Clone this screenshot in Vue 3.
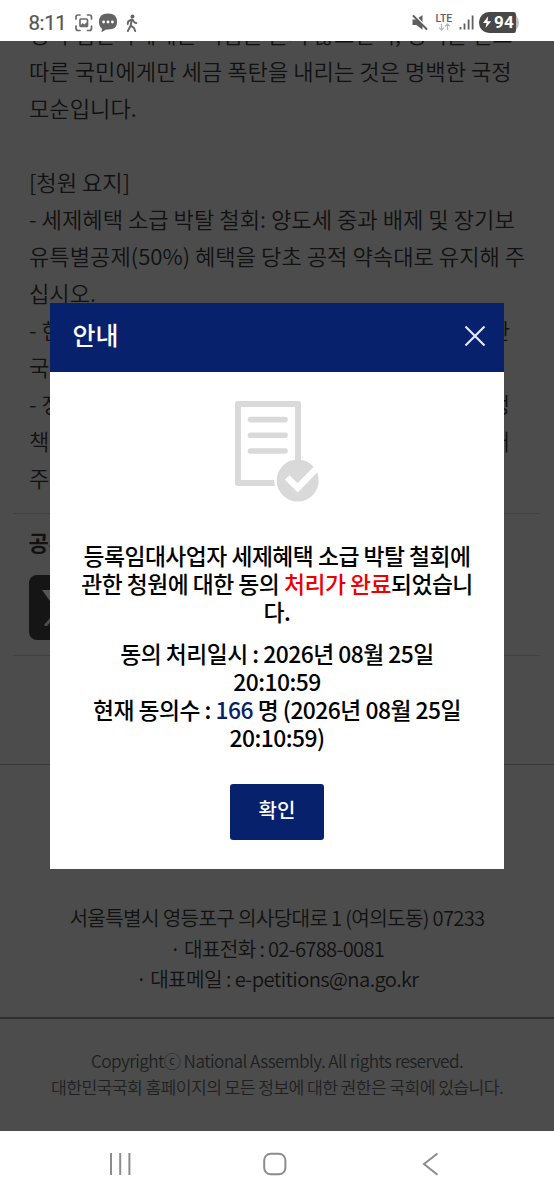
<script setup>
const bodyLines = [
  ['정작 입안자에게는 책임을 묻지 않으면서, 정책을 믿고'],
  ['따른 국민에게만 세금 폭탄을 내리는 것은 명백한 국정'],
  ['모순입니다.'],
  [''],
  ['[청원 요지]'],
  ['- 세제혜택 소급 박탈 철회: 양도세 중과 배제 및 장기보'],
  ['유특별공제(50%) 혜택을 당초 공적 약속대로 유지해 주'],
  ['십시오.'],
  ['- 현', '한'],
  ['국'],
  ['- 정', '정'],
  ['책', '어'],
  ['주'],
]
</script>

<template>
  <div class="phone">
    <header class="status">
      <span class="clock">8:11</span>
      <svg class="left-icons" width="70" height="24" viewBox="72 10 70 24">
        <g fill="none" stroke="#6a6a6a" stroke-width="1.700" stroke-linecap="round">
          <path d="M76 19v-2q0-2 2-2h2M87.500 15h2q2 0 2 2v2M91.500 26v2q0 2.500-2 2.500h-2M80 30.500h-2q-2 0-2-2.500v-2" />
          <rect x="80" y="19" width="7.500" height="7.500" rx="1" />
        </g>
        <path d="M80 26l2.500-3 2 1.500 2-2.500 1 4z" fill="#6a6a6a" />
        <path d="M108 13.500c6 0 9 2.700 9 8.300s-3 7.700-9 7.700h-2l-4.500 2.800.5-3.700c-2.200-1.300-3-3.600-3-6.800 0-5.600 3-8.300 9-8.300z" fill="#636363" />
        <g fill="#fff"><circle cx="103.600" cy="22" r="1.400" /><circle cx="108" cy="22" r="1.400" /><circle cx="112.400" cy="22" r="1.400" /></g>
        <circle cx="132.500" cy="16.400" r="2" fill="#666" />
        <path d="M131.700 19.500l-1 6 3.300 2.500 1.200 3M130.700 25.500l-1.200 2.600-1.700 2.900M131.500 19.500l-3.300 1.800-.5 2.700M132.800 20l1.500 2.300 2 .8" fill="none" stroke="#666" stroke-width="1.900" stroke-linecap="round" stroke-linejoin="round" />
      </svg>
      <svg class="right-icons" width="110" height="26" viewBox="410 10 110 26">
        <path d="M412.500 19.500h3.800l6.200-4.500v14.800l-6.200-4.700h-3.800z" fill="#5f5f5f" />
        <path d="M413.300 14.200l13.500 13.500" stroke="#fff" stroke-width="2" />
        <path d="M413.500 16l13 13" stroke="#5f5f5f" stroke-width="1.900" stroke-linecap="round" />
        <text x="435.500" y="21.800" class="lte">LTE</text>
        <path d="M441.500 24v6M439 27.700l2.500 2.500 2.500-2.500M447.500 30v-6M445 26.300l2.500-2.500 2.500 2.500" fill="none" stroke="#b4b4b4" stroke-width="1.100" />
        <path d="M460.500 27v2.600M464.500 23.500v6.100M468.600 19.500v10.100M472.600 15.500v14.100" stroke="#606060" stroke-width="1.800" />
        <rect x="479" y="12" width="40" height="21" rx="10.500" fill="#bdbdbd" />
        <path d="M489.500 12h24.300q2.200 0 2.200 2.500v16q0 2.500-2.200 2.500h-24.300a10.500 10.500 0 0 1 0-21z" fill="#484848" />
        <path d="M488.200 16.200l-5.200 6.800h3.500l-1 5 5.700-6.700h-3.700z" fill="#fff" />
        <text x="494" y="28.200" class="charge">94</text>
      </svg>
    </header>

    <main class="page">
      <section class="petition">
        <p v-for="(line, i) in bodyLines" :key="i" class="line" :class="{ split: line.length > 1 }">
          <span v-for="(part, j) in line" :key="j">{{ part }}</span>
        </p>
      </section>
      <section class="share">
        <h3>공유</h3>
        <div class="x-logo">
          <svg width="38" height="36" viewBox="0 0 38 36"><path d="M0 0h12l26 36H26z" fill="#555" /><path d="M35 0L3 36" fill="none" stroke="#4c4c4c" stroke-width="3" /></svg>
        </div>
      </section>
      <footer>
        <address>
          <p>서울특별시 영등포구 의사당대로 1 (여의도동) 07233</p>
          <p>· 대표전화 : 02-6788-0081</p>
          <p class="mail">· 대표메일 : e-petitions@na.go.kr</p>
        </address>
        <div class="copyright">
          <p class="en">Copyrightⓒ National Assembly. All rights reserved.</p>
          <p>대한민국국회 홈페이지의 모든 정보에 대한 권한은 국회에 있습니다.</p>
        </div>
      </footer>
    </main>

    <nav class="navbar">
      <svg width="24" height="24" viewBox="0 0 24 24"><path d="M3 1v22M12.200 1v22M21.400 1v22" /></svg>
      <svg width="24" height="24" viewBox="0 0 24 24"><rect x="1.200" y="1.700" width="21.200" height="20.600" rx="6.500" /></svg>
      <svg width="24" height="24" viewBox="0 0 24 24"><path d="M18.500 1.500L5 12l13.500 10.800" /></svg>
    </nav>

    <div class="dialog" role="dialog">
      <div class="dialog-head">
        <h2>안내</h2>
        <svg width="22" height="22" viewBox="0 0 22 22"><path d="M1.500 1.500l19 19M20.500 1.500l-19 19" stroke="#e1e8ff" stroke-width="2.200" /></svg>
      </div>
      <div class="dialog-body">
        <svg class="doc" width="86" height="102" viewBox="234 400 86 102">
          <rect x="238" y="404" width="60" height="79" fill="none" stroke="#d9d9d9" stroke-width="6" stroke-linejoin="round" />
          <path d="M250.500 419.600h34.500M250.500 435.300h34.500M250.500 451h34.500" stroke="#d9d9d9" stroke-width="5.600" stroke-linecap="round" />
          <circle cx="297.700" cy="480.500" r="23.500" fill="#fff" />
          <path d="M298 455v8" stroke="#d9d9d9" stroke-width="6" />
          <circle cx="297.700" cy="480.500" r="21" fill="#d9d9d9" />
          <path d="M287.200 477.500l10.500 10.300 18-18.500" fill="none" stroke="#fff" stroke-width="6.500" />
        </svg>
        <div class="message">
          <p>등록임대사업자 세제혜택 소급 박탈 철회에</p>
          <p>관한 청원에 대한 동의 <em>처리가 완료</em>되었습니</p>
          <p>다.</p>
        </div>
        <div class="message detail">
          <p>동의 처리일시 : 2026년 08월 25일</p>
          <p>20:10:59</p>
          <p>현재 동의수 : <b>166</b> 명 (2026년 08월 25일</p>
          <p>20:10:59)</p>
        </div>
        <button type="button">확인</button>
      </div>
    </div>
  </div>
</template>

<style>
body { margin: 0; background: #fff; }
</style>

<style scoped>
.phone { position: relative; width: 554px; height: 1200px; overflow: hidden; display: flex; flex-direction: column; background: #fff; font-family: "Noto Sans CJK KR", sans-serif; }
p, h2, h3 { margin: 0; white-space: nowrap; }
.status { flex: none; height: 41px; display: flex; box-sizing: border-box; padding: 10px 34px 0 28.500px; }
.clock { width: 43.500px; font: 400 20.500px/26px Roboto, sans-serif; letter-spacing: -.4px; color: #555; -webkit-text-stroke: .2px #555; }
.left-icons { display: block; }
.right-icons { display: block; margin-left: auto; }
.lte { font: 500 10.500px Roboto, sans-serif; fill: #606060; }
.charge { font: 700 17px Roboto, sans-serif; fill: #fff; letter-spacing: .2px; }
.page { flex: none; height: 1090px; overflow: hidden; background: #4c4c4c; color: #111; }
.petition { margin: -26px 14px 0 13px; padding: 0 15px 16px 16px; height: 482px; border-bottom: 1px solid #414141; font-size: 22.150px; font-weight: 350; }
.line { height: 37px; line-height: 37px; }
.split { width: 481px; display: flex; justify-content: space-between; }
.share { margin: 0 14px 0 13px; height: 142px; box-sizing: border-box; border-bottom: 1px solid #414141; padding: 11px 0 0 15.500px; }
.share h3 { font-size: 22px; font-weight: 700; line-height: 32px; }
.x-logo { margin-top: 18px; width: 65px; height: 65px; border-radius: 8px; background: #151515; display: flex; align-items: center; justify-content: center; }
footer { margin-top: 108px; border-top: 1px solid #3a3a3a; text-align: center; }
address { height: 254px; box-sizing: border-box; padding-top: 138px; border-bottom: 2px solid #2d2e30; font-style: normal; font-size: 20.200px; font-weight: 350; line-height: 30.500px; letter-spacing: -.7px; }
.mail { letter-spacing: -.6px; }
.copyright { padding-top: 29px; color: #1f1f1f; font-size: 17.200px; font-weight: 350; line-height: 26px; letter-spacing: -.62px; }
.en { letter-spacing: -.58px; }
.navbar { flex: 1; display: flex; justify-content: space-between; align-items: center; padding: 0 111px 3px 107.500px; }
.navbar svg { fill: none; stroke: #8c8c8c; stroke-width: 2; }
.dialog { position: absolute; left: 50px; top: 303px; width: 454px; height: 566px; background: #fff; color: #000; }
.dialog-head { height: 69px; box-sizing: border-box; padding: 0 18px 4px 22.500px; display: flex; align-items: center; justify-content: space-between; background: #07216d; }
.dialog-head h2 { color: #fff; font-size: 25px; font-weight: 500; line-height: 36px; margin-top: -4px; }
.dialog-head svg { margin-top: 1px; }
.dialog-body { display: flex; flex-direction: column; align-items: center; padding-top: 28px; text-align: center; }
.doc { display: block; }
.message { margin-top: 40px; font-size: 22.800px; line-height: 28px; letter-spacing: -.5px; font-weight: 500; }
.message em { color: #ea0000; font-style: normal; }
.message b { color: #07216d; font-weight: 500; }
.detail { margin-top: 14px; }
button { margin-top: 32px; width: 94px; height: 56px; border: 0; border-radius: 3px; padding: 0 0 5px; background: #07216d; color: #fff; font: 500 20px/30px "Noto Sans CJK KR", sans-serif; }
</style>
